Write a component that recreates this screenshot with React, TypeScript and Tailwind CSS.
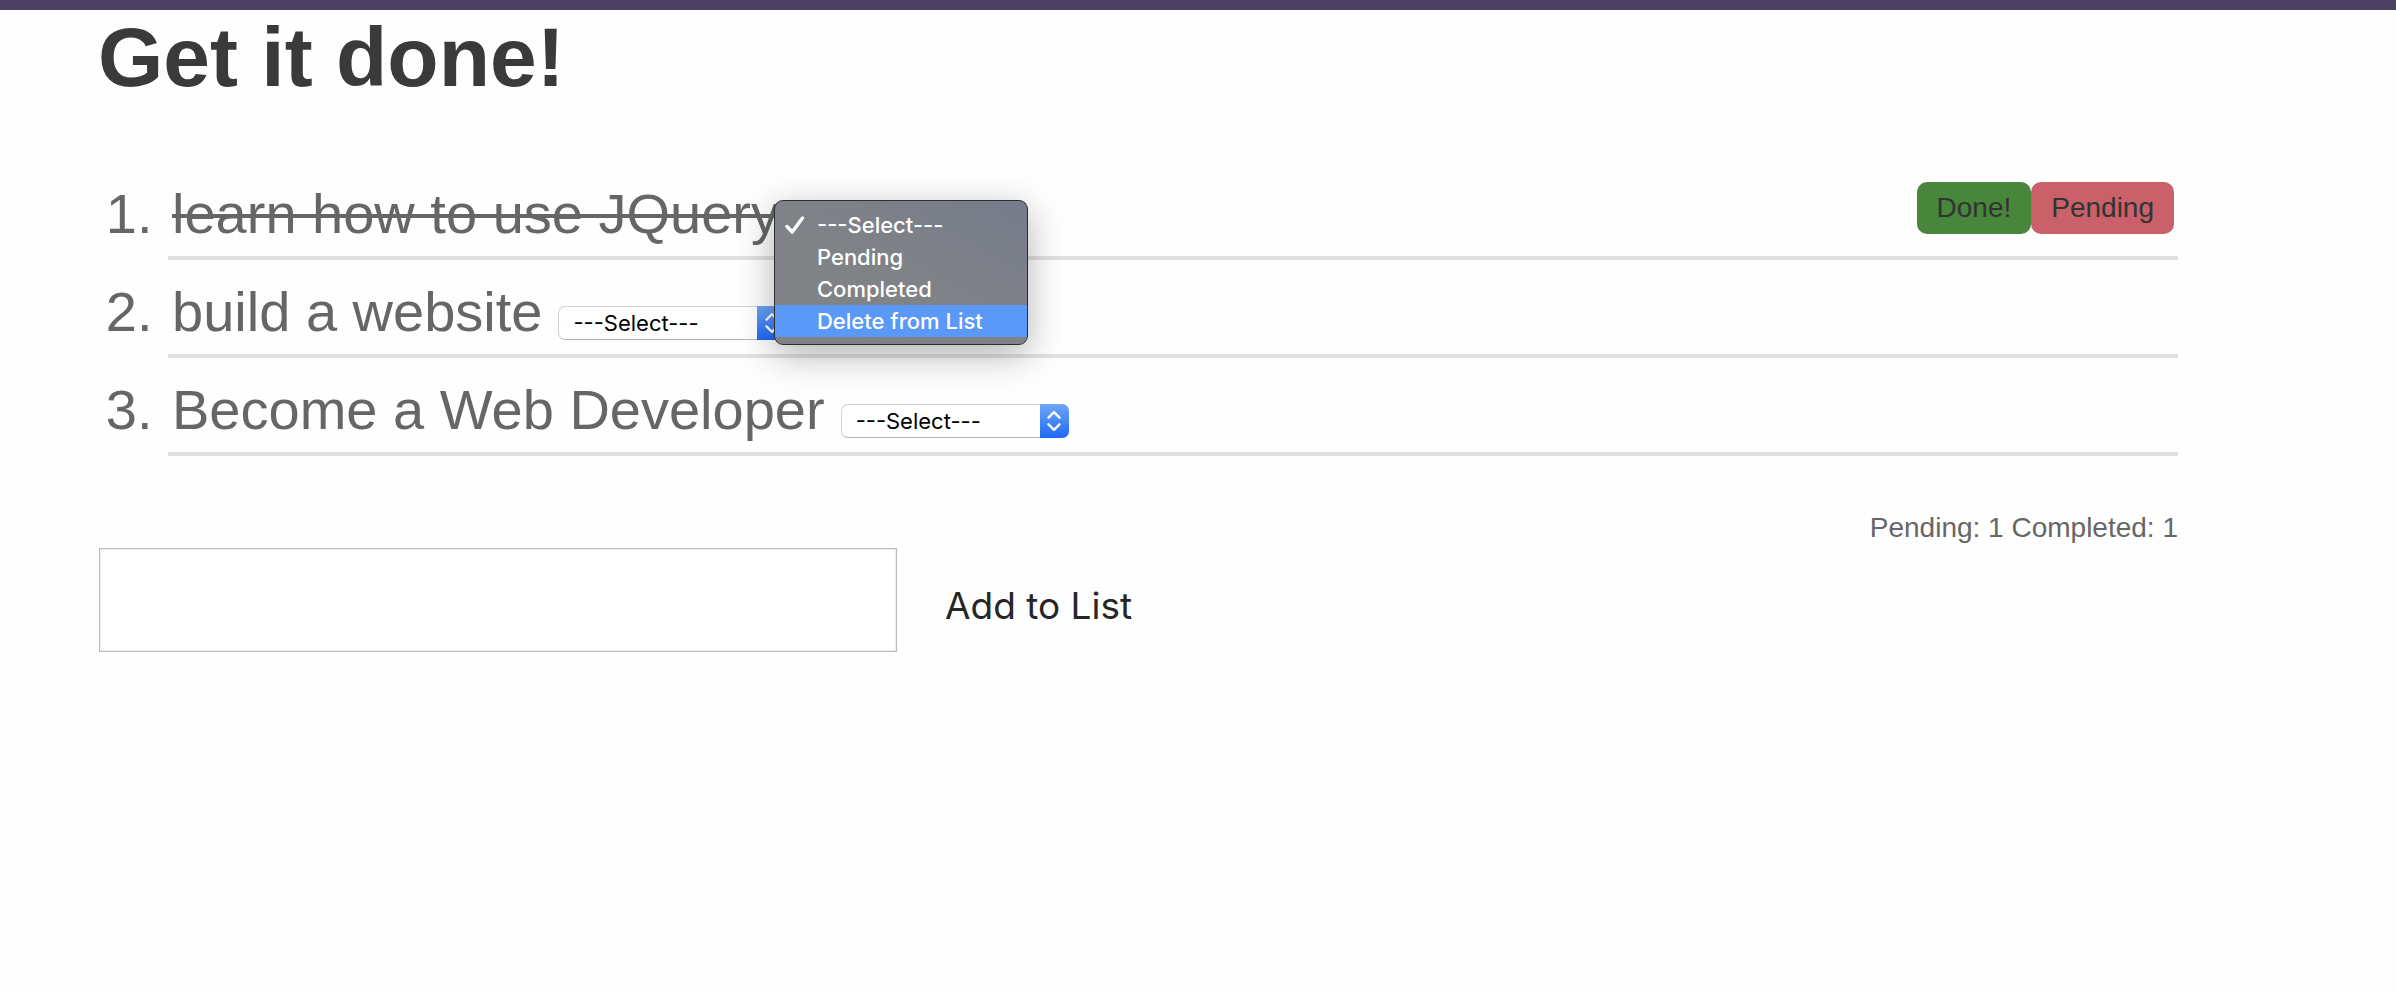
import { useState } from "react";

const OPTIONS = ["---Select---", "Pending", "Completed", "Delete from List"];

const TODOS = [
  { id: 1, title: "learn how to use JQuery", done: true, menuOpen: true },
  { id: 2, title: "build a website", done: false, menuOpen: false },
  { id: 3, title: "Become a Web Developer", done: false, menuOpen: false },
];

function StatusMenu() {
  return (
    <ul
      role="listbox"
      aria-label="Status options"
      className="absolute -top-2 -left-[21px] z-10 w-[254px] overflow-hidden rounded-[9px] border border-[#2c2d30] bg-linear-to-bl from-[#777c8c] via-[#7f8286] to-[#818387] pt-2 pb-[7px] font-['Inter',sans-serif] text-[22px] leading-8 font-medium text-white shadow-[0_10px_36px_rgba(0,0,0,0.3)]"
    >
      {OPTIONS.map((option, i) => (
        <li
          key={option}
          role="option"
          aria-selected={i === 0}
          className={`flex items-center pl-2.5 whitespace-nowrap ${i === 3 ? "bg-[#5b99f8]" : ""}`}
        >
          <span className="flex w-8 items-center">
            {i === 0 && (
              <svg width="20" height="20" viewBox="0 0 20 20" fill="none" aria-hidden="true">
                <path d="M2 11.5 L7.2 17 L17.5 3" stroke="white" strokeWidth="3.4" strokeLinecap="round" strokeLinejoin="round" />
              </svg>
            )}
          </span>
          {option}
        </li>
      ))}
    </ul>
  );
}

function StatusSelect({ label, open }: { label: string; open: boolean }) {
  return (
    <div className="relative flex w-[228px] items-baseline">
      <select
        aria-label={`Status of ${label}`}
        className="h-[34px] w-full appearance-none rounded-[7px] border border-[#d2d2d2] border-b-[#b4b4b4] bg-white pl-[14px] font-['Inter',sans-serif] text-[22px] leading-8 text-black"
      >
        {OPTIONS.map((option) => (
          <option key={option}>{option}</option>
        ))}
      </select>
      <span className="pointer-events-none absolute inset-y-0 right-0 flex w-[29px] items-center justify-center rounded-r-[7px] bg-linear-to-b from-[#6ea5f7] to-[#1c68f6]">
        <svg width="16" height="24" viewBox="0 0 16 24" fill="none" aria-hidden="true">
          <path d="M2.5 8.7 L8 3.2 L13.5 8.7 M2.5 15.3 L8 20.8 L13.5 15.3" stroke="white" strokeWidth="2.4" strokeLinecap="round" strokeLinejoin="round" />
        </svg>
      </span>
      {open && <StatusMenu />}
    </div>
  );
}

export default function App() {
  const [text, setText] = useState("");

  return (
    <div className="min-h-screen border-t-10 border-[#4c4063] bg-[#fefefe] pr-[218px] pl-[98px] font-['Liberation_Sans',Arial,sans-serif] text-[#666]">
      <h1 className="text-[84px] leading-[94px] font-bold text-[#3a3a3a]">Get it done!</h1>

      <ol className="mt-[58px] list-decimal pl-[70px] text-[56px] leading-[64px]">
        {TODOS.map((todo) => (
          <li key={todo.id} className="border-b-4 border-[#e2e1df]">
            <div className="flex items-baseline pt-5 pr-1 pb-2.5 pl-1">
              <span className={`mr-4 ${todo.done ? "line-through decoration-4" : ""}`}>{todo.title}</span>
              <StatusSelect label={todo.title} open={todo.menuOpen} />
              {todo.done && (
                <div className="ml-auto flex self-start text-[28px] leading-8 text-[#333]">
                  <button type="button" className="rounded-[10px] bg-[#48863c] px-5 py-2.5">Done!</button>
                  <button type="button" className="rounded-[10px] bg-[#c9606a] px-5 py-2.5">Pending</button>
                </div>
              )}
            </div>
          </li>
        ))}
      </ol>

      <p className="mt-14 mb-1 text-right text-[28px] leading-8">Pending: 1 Completed: 1</p>

      <form className="flex items-center gap-12" onSubmit={(e) => e.preventDefault()}>
        <input
          type="text"
          aria-label="New item"
          value={text}
          onChange={(e) => setText(e.target.value)}
          className="ml-px h-[104px] w-[798px] border border-[#bcbcbc] bg-white px-4 text-[40px] inset-shadow-[0_0_0_1px_#ededed]"
        />
        <button type="submit" className="pt-3 font-['Inter',sans-serif] text-[37px] leading-12 text-[#262626]">
          Add to List
        </button>
      </form>
    </div>
  );
}
